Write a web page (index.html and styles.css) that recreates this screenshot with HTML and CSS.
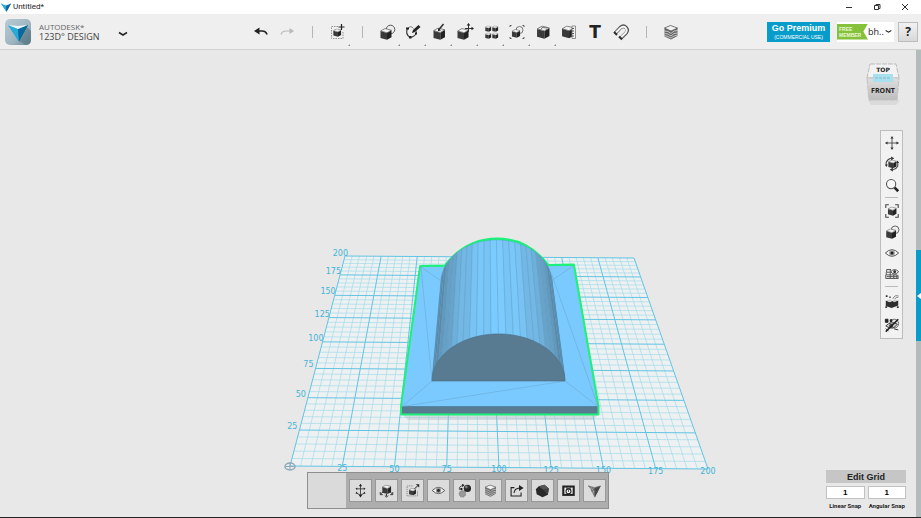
FILE: index.html
```html
<!DOCTYPE html>
<html lang="en">
<head>
<meta charset="utf-8">
<title>Untitled*</title>
<link rel="stylesheet" href="styles.css">
</head>
<body>
<svg class="defs" aria-hidden="true">
  <defs>
    <linearGradient id="g-mark" x1="0" x2="1"><stop offset="0" stop-color="#35b4e0"/><stop offset=".5" stop-color="#0f86bb"/><stop offset="1" stop-color="#07527f"/></linearGradient>
    <linearGradient id="g-tile" x1="0" x2="1" y2="1"><stop offset="0" stop-color="#b9cbd4"/><stop offset=".6" stop-color="#9db4c0"/><stop offset="1" stop-color="#66828f"/></linearGradient>
    <linearGradient id="g-cube" x1="0" x2="0" y1="0" y2="1"><stop offset="0" stop-color="#dedede"/><stop offset="1" stop-color="#bdbdbd"/></linearGradient>
    <radialGradient id="g-ball" cx=".35" cy=".3"><stop offset="0" stop-color="#aaa"/><stop offset=".5" stop-color="#333"/><stop offset="1" stop-color="#222"/></radialGradient>
  </defs>
  <symbol id="cube" viewBox="0 0 12 12"><path d="M.5 3 7 5v6.700L.5 10Z" fill="#3a3a3a"/><path d="M7 5 11.500 2.300v7L7 11.700Z" fill="#222"/><path d="M.7 3 5 .5l6.300 1.700L7 4.800Z" fill="#f2f2f2" stroke="#444" stroke-width=".6"/></symbol>
  <symbol id="mark" viewBox="0 0 20 18"><path d="M0 1 10 5 20 1 11 17.500Z" fill="url(#g-mark)"/><path d="M0 1 10 5 11 17.500Z" fill="#28a9d9"/><path d="M10 5 20 1 11 17.500Z" fill="#086a9c"/><path d="M0 1 10 5 20 1 10 2Z" fill="#e8f6fb"/></symbol>
  <symbol id="undo" viewBox="0 0 18 18"><path d="M4 8h6q4 0 5 3.500" fill="none" stroke="currentColor" stroke-width="1.600"/><path d="M2 8 7.500 4.500v7Z" fill="currentColor"/></symbol>
  <symbol id="redo" viewBox="0 0 18 18"><path d="M14 8H8q-4 0-5 3.500" fill="none" stroke="currentColor" stroke-width="1.200"/><path d="M16 8 11.500 5v6Z" fill="currentColor"/></symbol>
  <symbol id="insert" viewBox="0 0 18 18"><path d="M10 3.500H3.500v12h11.500V8" fill="none" stroke="#888" stroke-width=".9" stroke-dasharray="1.500 1"/><use href="#cube" x="5" y="5.500" width="8.500" height="8.500"/><path d="M13.500 1v6M10.500 4h6" stroke="#222" stroke-width="1.200"/></symbol>
  <symbol id="primitive" viewBox="0 0 18 18"><circle cx="12.500" cy="6.500" r="4.300" fill="#eee" stroke="#555"/><use href="#cube" x="2" y="5" width="12" height="12"/></symbol>
  <symbol id="sketch" viewBox="0 0 18 18"><path d="M3.500 5.500Q1 11 6 14.500q6-1 6.500-6" fill="none" stroke="#333" stroke-width="1.100"/><path d="M3.500 5.500Q7 2 9.500 5.500" fill="none" stroke="#777"/><path d="m8 10 1-3 5.500-5 2 2-5.500 5Z" fill="#222"/><path d="M2 4.500h3v2H2zM5 13h2.500v2.500H5zM11 9.500h2v2h-2z" fill="#222"/></symbol>
  <symbol id="construct" viewBox="0 0 18 18"><use href="#cube" x="3" y="4.500" width="12.500" height="12.500"/><path d="m9 6.500 4.500-5.500" stroke="#333" stroke-width="1.600"/><path d="M8 5v3l3-.5Z" fill="#222"/></symbol>
  <symbol id="modify" viewBox="0 0 18 18"><use href="#cube" x="1" y="5" width="12" height="12"/><path d="M9 5.500h8M12.500 2v7" stroke="#333"/><path d="m12.500 0 1.800 2.500h-3.600ZM18 5.500l-2.500 1.800V3.700Z" fill="#222"/></symbol>
  <symbol id="pattern" viewBox="0 0 18 18"><use href="#cube" x="3" y="2.500" width="6.500" height="6.500"/><use href="#cube" x="10" y="2.500" width="6.500" height="6.500"/><use href="#cube" x="3" y="9.500" width="6.500" height="6.500"/><use href="#cube" x="10" y="9.500" width="6.500" height="6.500"/></symbol>
  <symbol id="group" viewBox="0 0 18 18"><circle cx="11.500" cy="7" r="3.500" fill="none" stroke="#777"/><use href="#cube" x="3.500" y="6" width="9" height="9"/><path d="M2 4V2.500h1.500M14.500 2.500H16V4M2 14v1.500h1.500M14.500 15.500H16V14" fill="none" stroke="#555"/></symbol>
  <symbol id="combine" viewBox="0 0 18 18"><use href="#cube" x="2.500" y="2.500" width="13.500" height="13.500"/><path d="M8 4.500 7 6.500M8 4.500l5 .5" fill="none" stroke="#444" stroke-width=".7"/></symbol>
  <symbol id="measure" viewBox="0 0 18 18"><use href="#cube" x="1.500" y="2.500" width="13" height="13"/><path d="M12 3h3.500v12.500H12Z" fill="#f2f2f2" stroke="#777" stroke-width=".8"/><path d="M12 5.500h2M12 8h2M12 10.500h2M12 13h2" stroke="#444" stroke-width=".9"/></symbol>
  <symbol id="snap" viewBox="0 0 18 18"><path d="m3.500 10 5-5.500q3-2.500 5.500 0t0 5.500l-5 5" fill="none" stroke="#555" stroke-width="3.600"/><path d="m4 9.500 4.700-4.700q3-2.200 5 0t0 5l-4.500 4.500" fill="none" stroke="#f4f4f4" stroke-width="2"/><path d="m2 9 3 3M7 13.500l3 3" stroke="#333" stroke-width="2"/></symbol>
  <symbol id="material" viewBox="0 0 18 18"><path d="m2.500 5 6-2.500L15.500 5v8l-6.500 3.500-6.500-3Z" fill="#666"/><path d="m2.500 5 6-2.500L15.500 5 9 8Z" fill="#f2f2f2" stroke="#555" stroke-width=".7"/><path d="m2.500 8 3.500.5 3 2 3-2.500 3.500-.5M2.500 10.500l3.500.5 3 2 3-2.500 3.500-.5M2.500 12.500 6 13.500l3 1.500 3-2 3.500-1" fill="none" stroke="#ddd" stroke-width=".8"/></symbol>
  <symbol id="pan" viewBox="0 0 18 18"><path d="M9 3v12M3 9h12" stroke="#444"/><path d="m9 1 1.800 3H7.200ZM9 17l1.800-3H7.200ZM1 9l3-1.800v3.600ZM17 9l-3-1.800v3.600Z" fill="#333"/></symbol>
  <symbol id="orbit" viewBox="0 0 18 18"><use href="#cube" x="4.500" y="4" width="10" height="10"/><path d="M2.500 11V7Q4.500 3 8 2.500M15.500 7v4.500q-2 3.500-5.500 4" fill="none" stroke="#444" stroke-width="1.200"/><path d="m8 .5 3.500 2L8 5ZM10 17.500l-3.500-2 3.500-2.500ZM1 9.500l1.700 3 1.700-3ZM17 8l-1.700-3L13.600 8Z" fill="#333"/></symbol>
  <symbol id="zoom" viewBox="0 0 18 18"><circle cx="8" cy="8" r="5.200" fill="#f7f7f7" stroke="#555" stroke-width="1.200"/><path d="m12 12 4 4" stroke="#222" stroke-width="3"/></symbol>
  <symbol id="fit" viewBox="0 0 18 18"><use href="#cube" x="4" y="4" width="10.500" height="10.500"/><path d="M2 5.500V2h3.500M12.500 2H16v3.500M2 12.500V16h3.500M12.500 16H16v-3.500" fill="none" stroke="#444" stroke-width="1.200"/></symbol>
  <symbol id="eye" viewBox="0 0 18 18"><path d="M1.500 9Q9 1.500 16.500 9 9 16.500 1.500 9Z" fill="#f4f4f4" stroke="#444"/><circle cx="9" cy="9" r="3.200" fill="#999"/><circle cx="9" cy="9" r="1.700" fill="#222"/></symbol>
  <symbol id="grideye" viewBox="0 0 18 18"><path d="M3 4h5M3 4v3h4M2.500 7v3h12M2 10v4h14l-.5-4M7 4v10M11 10v4M14.500 10v4M3 12h12" fill="none" stroke="#444"/><path d="M7.500 6.500q4.500-5 9 0-4.500 5-9 0Z" fill="#eee" stroke="#444"/><circle cx="12" cy="6.500" r="1.600" fill="#333"/></symbol>
  <symbol id="snapgroup" viewBox="0 0 18 18"><path d="m2 8.500 4.500 2 3-1.500 2 1 4.500-1.500V14l-7.500 3L2 14.500Z" fill="#2e2e2e"/><path d="m3 8.500 4-1.500 2 1.500-2.500 1.500ZM9.500 8.800l3-1.500 3 1-3.500 1.500Z" fill="#ccc"/><path d="M10 6.500q2-5 6.500-3M12 7q1.500-3 4-2" fill="none" stroke="#777"/><path d="M2 2.500h2v2H2zM6 4h1.500v1.500H6zM1.500 15h2v2h-2zM14.500 15h2v2h-2z" fill="#333"/></symbol>
  <symbol id="hide" viewBox="0 0 18 18"><circle cx="11.500" cy="7.500" r="5" fill="#e4e4e4" stroke="#666"/><path d="M2 10q6-6 13-2-5 8-13 2Z" fill="#ccc" stroke="#333"/><circle cx="8" cy="10" r="2.300" fill="#444"/><path d="M2 16.500 16 2.500" stroke="#222" stroke-width="1.800"/><path d="M1.500 2.500h3v3.500h-3zM7 3h2v2H7zM2 13l3 3M11.500 13.500l4.500 1" stroke="#222" fill="#222"/></symbol>
  <symbol id="move" viewBox="0 0 18 18"><path d="M9 3v13M4.500 7h9M4 11q1 3 5 3t5-3" fill="none" stroke="#333"/><path d="m9 1 2 3H7ZM9 17.500l2-3H7ZM3 7l2-1.500v3ZM15 7l-2-1.500v3ZM3 13l3-.5-2-2ZM15 13l-3-.5 2-2Z" fill="#222"/></symbol>
  <symbol id="drop" viewBox="0 0 18 18"><use href="#cube" x="3.500" y="2" width="11.500" height="11.500"/><path d="m2 13 2.500-2M16 13l-2.500-2M1.500 11v3h3M16.500 11v3h-3M9 13v3M7 15l2 2 2-2" fill="none" stroke="#333" stroke-width="1.200"/></symbol>
  <symbol id="scale" viewBox="0 0 18 18"><path d="M9 3.500H2.500v12H15V9" fill="none" stroke="#777" stroke-dasharray="1.500 1"/><use href="#cube" x="4.500" y="6" width="9" height="9"/><path d="m11.500 7 3.500-3.500" stroke="#222" stroke-width="1.200"/><path d="M17 1.500v4l-4-4Z" fill="#222"/></symbol>
  <symbol id="balls" viewBox="0 0 18 18"><circle cx="12.500" cy="6.500" r="4.300" fill="url(#g-ball)"/><circle cx="6.500" cy="13" r="3.900" fill="#999" stroke="#666" stroke-dasharray="1 1"/><path d="M3 8q-1-4 4-5" fill="none" stroke="#333"/><path d="m6 1 3 1.500L6.500 5ZM4 6h2.500v2.500H4Z" fill="#222"/></symbol>
  <symbol id="export" viewBox="0 0 18 18"><path d="M6.500 5.500H2.500V15.500h12v-4M6 12q.5-5.500 7-6" fill="none" stroke="#222" stroke-width="1.300"/><path d="M12 2.500v7l5.500-3.500Z" fill="#222"/></symbol>
  <symbol id="hex" viewBox="0 0 18 18"><path d="m4.500 4 7-2 5 4.500-1 7.500-6.500 3L2 13.500 1 7.500Z" fill="#292929"/><path d="m4.500 4 7-2 5 4.500L10 8Z" fill="#555"/><path d="m10 8 6.500-1.500-1 7.500Z" fill="#404040"/></symbol>
  <symbol id="print" viewBox="0 0 18 18"><path d="M1.500 3h15v12.500h-15Z" fill="#222"/><path d="M4 5.500h10V13H4Z" fill="#eee"/><circle cx="9" cy="10" r="3" fill="none" stroke="#222" stroke-width="1.300"/><path d="M7 5v2h4V5M9 8.500v2" stroke="#222" fill="none"/></symbol>
  <symbol id="mesh" viewBox="0 0 18 18"><path d="m1.500 3.500 7.500 2 7.500-2-7 13.500Z" fill="#aaa"/><path d="m9 6 7.500-2.500-7 13.500Z" fill="#444"/><path d="m1.500 3.500 7.500 2 7.500-2M5 7l4.500 10M1.500 3.500l11 7.500M9 6v10M6 5l6 6M5 10l9-5" fill="none" stroke="#555" stroke-width=".7"/></symbol>
  <symbol id="chevron" viewBox="0 0 10 6"><path d="m1 1.500 4 2.500 4-2.500" fill="none" stroke="#222" stroke-width="1.500"/></symbol>
</svg>

<header class="titlebar">
  <svg class="titlebar-mark"><use href="#mark"/></svg>
  <span class="titlebar-name">Untitled*</span>
  <div class="window-buttons">
    <button aria-label="Minimize"><svg viewBox="0 0 8 8"><path d="M1 4.500h6"/></svg></button>
    <button aria-label="Restore"><svg viewBox="0 0 8 8"><path d="M1.500 2.500h4v4h-4ZM3 2.500v-1h4v4H5.500"/></svg></button>
    <button aria-label="Close"><svg viewBox="0 0 8 8"><path d="m1 1 6 6M7 1 1 7"/></svg></button>
  </div>
</header>

<div class="toolbar">
  <div class="brand">
    <svg class="brand-tile" viewBox="0 0 26 26"><rect width="26" height="26" rx="5" fill="url(#g-tile)"/><path d="m14 22 8-14 4 4v9q0 5-5 5Z" fill="#547481" opacity=".6"/><use href="#mark" x="3" y="5" width="20" height="18"/></svg>
    <div class="brand-text"><span class="brand-company">AUTODESK*</span><span class="brand-product">123D° DESIGN</span></div>
    <button class="brand-menu" aria-label="Main menu"><svg><use href="#chevron"/></svg></button>
  </div>
  <nav class="tools" aria-label="Tools">
    <button class="tool" aria-label="Undo"><svg><use href="#undo"/></svg></button>
    <button class="tool tool-off" aria-label="Redo"><svg><use href="#redo"/></svg></button>
    <span class="divider"></span>
    <button class="tool tool-more" aria-label="Insert"><svg><use href="#insert"/></svg></button>
    <span class="divider"></span>
    <button class="tool tool-more" aria-label="Primitives"><svg><use href="#primitive"/></svg></button>
    <button class="tool tool-more" aria-label="Sketch"><svg><use href="#sketch"/></svg></button>
    <button class="tool tool-more" aria-label="Construct"><svg><use href="#construct"/></svg></button>
    <button class="tool tool-more" aria-label="Modify"><svg><use href="#modify"/></svg></button>
    <button class="tool tool-more" aria-label="Pattern"><svg><use href="#pattern"/></svg></button>
    <button class="tool tool-more" aria-label="Grouping"><svg><use href="#group"/></svg></button>
    <button class="tool tool-more" aria-label="Combine"><svg><use href="#combine"/></svg></button>
    <button class="tool" aria-label="Measure"><svg><use href="#measure"/></svg></button>
    <button class="tool tool-text" aria-label="Text">T</button>
    <button class="tool" aria-label="Snap"><svg><use href="#snap"/></svg></button>
    <span class="divider"></span>
    <button class="tool" aria-label="Material"><svg><use href="#material"/></svg></button>
  </nav>
  <div class="account">
    <button class="premium"><strong>Go Premium</strong><span>(COMMERCIAL USE)</span></button>
    <div class="member">
      <span class="ribbon"><span>FREE</span><span>MEMBER</span></span>
      <select aria-label="Account"><option>bh..</option></select>
      <svg><use href="#chevron"/></svg>
    </div>
    <button class="help" aria-label="Help">?</button>
  </div>
</div>

<main class="stage">
  <svg class="scene" viewBox="0 50 921 467" preserveAspectRatio="xMidYMid slice" role="img" aria-label="Model on grid">
    <g id="grid"></g>
    <ellipse cx="290" cy="466.500" rx="5" ry="3.500" fill="none" stroke="#8ea9b8" stroke-width="1.500"/>
    <path d="M286 466.500h8M290 463v7" stroke="#8ea9b8"/>
    <g id="labels" class="grid-labels"></g>
    <path d="M403 415h195l-6 5H408Z" fill="#aebbc2" opacity=".4"/>
    <path d="M420.500 266.500 445 266Q466 239 497 239T548 265.500L573.500 265 598 406.500V414H401.500V406.500Z" fill="#7bcaff" stroke="#1df17b" stroke-width="3" stroke-linejoin="round"/>
    <path d="M421 267 573 266 597.500 406.500H402Z" fill="#7bcaff"/>
    <path d="M402 406.500H597.500V413.500H402Z" fill="#587b92"/>
    <path d="M402 406.500H597.500" stroke="#4c7c9c" stroke-width=".7"/>
    <path d="M402 406.500 432 381M402 406.500 565 381 598 406.500 552 275M421 267l11 114M421 267l20 14M573 266l-22 15" fill="none" stroke="#6aa9d2" stroke-width=".6"/>
    <g id="barrel"></g>
  </svg>

  <div class="viewcube">
    <svg viewBox="0 0 40 46" aria-hidden="true"><path d="M5 40h32l-4 5H8Z" fill="#ccc" opacity=".5"/><path d="M7 4h26l3 14H4Z" fill="#f2f2f2" stroke="#bbb" stroke-dasharray="5 1"/><path d="M4 18h32l-2 22H6Z" fill="url(#g-cube)" stroke="#c2c2c2" stroke-dasharray="6 1"/><path d="M10 14h20v8H10Z" fill="#a9e0ef"/><path d="M12 18h16" stroke="#83b8c8" stroke-dasharray="3 1"/></svg>
    <span class="viewcube-top">TOP</span>
    <span class="viewcube-front">FRONT</span>
  </div>

  <nav class="navbar" aria-label="View">
    <button aria-label="Pan"><svg><use href="#pan"/></svg></button>
    <button aria-label="Orbit"><svg><use href="#orbit"/></svg></button>
    <button aria-label="Zoom"><svg><use href="#zoom"/></svg></button>
    <hr>
    <button aria-label="Fit"><svg><use href="#fit"/></svg></button>
    <button aria-label="Display mode"><svg><use href="#primitive"/></svg></button>
    <button aria-label="Visibility"><svg><use href="#eye"/></svg></button>
    <button aria-label="Grid visibility"><svg><use href="#grideye"/></svg></button>
    <hr>
    <button class="tall" aria-label="Group snap"><svg><use href="#snapgroup"/></svg></button>
    <button class="tall" aria-label="Hide sketches"><svg><use href="#hide"/></svg></button>
  </nav>

  <div class="context">
    <div class="context-name"></div>
    <div class="context-tools">
      <button aria-label="Move"><svg><use href="#move"/></svg></button>
      <button aria-label="Drop to grid"><svg><use href="#drop"/></svg></button>
      <button aria-label="Scale"><svg><use href="#scale"/></svg></button>
      <button aria-label="Hide"><svg><use href="#eye"/></svg></button>
      <button aria-label="Replace"><svg><use href="#balls"/></svg></button>
      <button aria-label="Material"><svg><use href="#material"/></svg></button>
      <button aria-label="Export"><svg><use href="#export"/></svg></button>
      <button aria-label="Convert"><svg><use href="#hex"/></svg></button>
      <button aria-label="Print"><svg><use href="#print"/></svg></button>
      <button aria-label="Mesh"><svg><use href="#mesh"/></svg></button>
    </div>
  </div>

  <form class="snaps">
    <button type="button" class="edit-grid">Edit Grid</button>
    <div class="snap-field"><input id="linear" value="1"><label for="linear">Linear Snap</label></div>
    <div class="snap-field"><input id="angular" value="1"><label for="angular">Angular Snap</label></div>
  </form>

  <div class="edge"><button class="edge-handle" aria-label="Open panel"></button></div>
</main>
<script src="script.js"></script>
</body>
</html>
```
FILE: styles.css
```css
* { box-sizing: border-box; }

body {
  margin: 0;
  height: 100vh;
  display: flex;
  flex-direction: column;
  background: #e8e8e8;
  font-family: "Open Sans", "Noto Sans", sans-serif;
  color: #222;
  overflow: hidden;
}

button {
  display: flex;
  align-items: center;
  justify-content: center;
  margin: 0;
  padding: 0;
  border: 0;
  background: none;
  color: inherit;
  font: inherit;
}

.defs { position: absolute; width: 0; height: 0; }

/* Title bar */
.titlebar {
  display: flex;
  align-items: center;
  height: 14px;
  padding: 0 10px 0 1px;
  background: #fff;
}
.titlebar-mark { width: 10px; height: 9px; margin-right: 2px; }
.titlebar-name { font: 8px/14px Roboto, sans-serif; }
.window-buttons { display: flex; gap: 16px; margin-left: auto; }
.window-buttons button { width: 12px; height: 14px; }
.window-buttons svg { width: 8px; height: 8px; fill: none; stroke: #333; stroke-width: 1; }

/* Toolbar */
.toolbar {
  display: flex;
  align-items: center;
  height: 36px;
  background: #efefef;
  border-bottom: 1px solid #d3d3d3;
}
.brand { display: flex; align-items: center; width: 248px; padding-left: 5px; }
.brand-tile { width: 26px; height: 26px; margin-right: 8px; }
.brand-text { display: flex; flex-direction: column; width: 79px; line-height: 10px; white-space: nowrap; color: #444; }
.brand-company { font-size: 8px; color: #666; }
.brand-product { font-size: 9px; font-weight: 500; }
.brand-menu { width: 10px; height: 8px; margin-top: 4px; }
.brand-menu svg { width: 10px; height: 6px; }

.tools { display: flex; align-items: center; }
.tool { position: relative; width: 26px; height: 28px; }
.tool svg { width: 18px; height: 18px; }
.tool-off { color: #b9b9b9; }
.tool-text { font: bold 17px/18px "DejaVu Sans", sans-serif; }
.tool-more::after {
  content: "";
  position: absolute;
  right: 0;
  bottom: 0;
  border: 1px solid transparent;
  border-right-color: #888;
  border-bottom-color: #888;
}
.divider { width: 24px; height: 12px; background: linear-gradient(#b5b5b5, #b5b5b5) center / 1px 100% no-repeat; }

.account { display: flex; align-items: center; margin-left: auto; padding-right: 3px; }
.premium {
  flex-direction: column;
  width: 63px;
  height: 20px;
  margin-right: 7px;
  background: #089ccb;
  color: #fff;
  font-family: "Liberation Sans", sans-serif;
}
.premium strong { font-size: 9px; line-height: 11px; }
.premium span { font-size: 5px; line-height: 7px; white-space: nowrap; }
.member { display: flex; align-items: center; width: 57px; height: 20px; margin-right: 4px; padding-right: 2px; background: #fff; }
.ribbon {
  display: flex;
  flex-direction: column;
  width: 31px;
  height: 16px;
  padding: 2px 0 0 2px;
  background: #86c13c;
  clip-path: polygon(0 0, 100% 0, 85% 50%, 100% 100%, 0 100%);
  color: #e9f7d4;
  font: bold 5px/6px "Liberation Sans", sans-serif;
}
.member select {
  appearance: none;
  width: 17px;
  padding: 0;
  border: 0;
  background: none;
  color: #222;
  font: 9px/16px "Open Sans", sans-serif;
}
.member svg { width: 7px; height: 5px; }
.help {
  width: 20px;
  height: 20px;
  border: 1px solid #bdbdbd;
  background: linear-gradient(#f2f2f2, #d8d8d8);
  font-size: 12px;
  font-weight: 700;
}

/* Stage and its floating panels */
.stage { position: relative; flex: 1; min-height: 0; border-bottom: 1px solid #222; }
.scene { display: block; width: 100%; height: 100%; }
.grid-labels { fill: #43b5d8; font: 8px "DejaVu Sans", sans-serif; }

.viewcube { position: absolute; top: 10px; right: 18px; width: 40px; height: 46px; text-align: center; }
.viewcube svg { position: absolute; inset: 0; }
.viewcube span { position: absolute; left: 0; width: 100%; font-weight: 700; }
.viewcube .viewcube-top { top: 6px; font: bold 6px/8px "DejaVu Sans", sans-serif; }
.viewcube-front { top: 26px; font-size: 7px; line-height: 10px; }

.navbar {
  position: absolute;
  top: 80px;
  right: 18px;
  display: flex;
  flex-direction: column;
  align-items: center;
  width: 23px;
  padding: 1px 0;
  border: 1px solid #bdbdbd;
  background: #f2f2f2;
}
.navbar button { width: 21px; height: 21px; }
.navbar .tall { height: 24px; }
.navbar svg { width: 16px; height: 16px; }
.navbar hr { width: 13px; height: 1px; margin: 2px 0; border: 0; background: #bbb; }

.context {
  position: absolute;
  left: 50%;
  bottom: 8px;
  display: flex;
  width: 302px;
  height: 37px;
  margin-left: -154px;
  border: 1px solid #8e8e8e;
  background: #adadad;
}
.context-name { flex: 1; background: #dadada; }
.context-tools { display: flex; align-items: center; gap: 3px; padding: 0 2px 0 3px; }
.context-tools button { width: 23px; height: 23px; border: 1px solid #989898; background: #dcdcdc; }
.context-tools svg { width: 15px; height: 15px; }

.snaps {
  position: absolute;
  right: 15px;
  bottom: 7px;
  display: grid;
  grid-template-columns: 1fr 1fr;
  gap: 3px;
  width: 80px;
  font-family: "Liberation Sans", sans-serif;
}
.edit-grid { grid-column: 1 / -1; height: 13px; background: #c6c6c6; font-size: 9px; font-weight: 700; }
.snap-field { display: flex; flex-direction: column; align-items: center; gap: 3px; }
.snap-field input {
  width: 100%;
  height: 13px;
  padding: 0;
  border: 1px solid #c2c2c2;
  background: #fff;
  text-align: center;
  font: bold 8px/11px "Liberation Sans", sans-serif;
}
.snap-field label { font: bold 6px/8px Roboto, sans-serif; white-space: nowrap; }

.edge { position: absolute; top: 0; right: 0; bottom: 0; display: flex; align-items: center; width: 5px; background: #b3bcbc; }
.edge-handle { width: 5px; height: 91px; margin-top: 24px; background: #089ccb; }
.edge-handle::before { content: ""; border: 3px solid transparent; border-left: 0; border-right: 4px solid #fff; }
```
FILE: script.js
```js
const NS = "http://www.w3.org/2000/svg";

function add(parent, name, attrs, text) {
  const el = document.createElementNS(NS, name);
  for (const key in attrs) el.setAttribute(key, attrs[key]);
  if (text !== undefined) el.textContent = text;
  parent.appendChild(el);
}

// Perspective map from the unit square to the corners of the work plane.
function perspective([x0, y0], [x1, y1], [x2, y2], [x3, y3]) {
  const dx1 = x1 - x2, dx2 = x3 - x2, sx = x0 - x1 + x2 - x3;
  const dy1 = y1 - y2, dy2 = y3 - y2, sy = y0 - y1 + y2 - y3;
  const den = dx1 * dy2 - dx2 * dy1;
  const g = (sx * dy2 - dx2 * sy) / den;
  const h = (dx1 * sy - sx * dy1) / den;
  return (u, v) => {
    const w = g * u + h * v + 1;
    return [
      ((x1 - x0 + g * x1) * u + (x3 - x0 + h * x3) * v + x0) / w,
      ((y1 - y0 + g * y1) * u + (y3 - y0 + h * y3) * v + y0) / w
    ];
  };
}

const project = perspective([290, 466], [708, 469], [634, 258], [345, 256]);
const grid = document.getElementById("grid");
const corners = [project(0, 0), project(1, 0), project(1, 1), project(0, 1)];
add(grid, "polygon", { points: corners.join(" "), fill: "#edf1f2" });

function line(a, b, major) {
  add(grid, "line", {
    x1: a[0], y1: a[1], x2: b[0], y2: b[1],
    stroke: major ? "#62c4e3" : "#a3dbe9",
    "stroke-width": major ? 1 : 0.7
  });
}
for (const major of [false, true]) {
  for (let i = 0; i <= 40; i++) {
    if ((i % 5 === 0) !== major) continue;
    const t = i / 40;
    line(project(t, 0), project(t, 1), major);
    line(project(0, t), project(1, t), major);
  }
}

const labels = document.getElementById("labels");
for (let n = 25; n <= 200; n += 25) {
  const bottom = project(n / 200, 0);
  add(labels, "text", { x: bottom[0], y: bottom[1] + 5, "text-anchor": "middle" }, n);
  const side = project(0, n / 200);
  const shift = n === 200 ? 3 : n >= 100 ? 1 : -2;
  add(labels, "text", { x: side[0] + shift, y: side[1] - (n === 200 ? 0 : 1), "text-anchor": "end" }, n);
}

// Half cylinder: facets run from the back arc to the front arc.
const barrel = document.getElementById("barrel");
const front = a => [498.5 - 66.5 * Math.cos(a), 381 - 47 * Math.sin(a)];
const back = a => [496.5 - 55.5 * Math.cos(a), 282 - 42 * Math.sin(a)];
const dark = [84, 119, 142], light = [124, 203, 255];
const steps = 28;
for (let i = 0; i < steps; i++) {
  const a = Math.PI * i / steps, b = Math.PI * (i + 1) / steps;
  const k = Math.min(1, Math.pow(Math.sin((a + b) / 2), 1.3) - (i % 3 === 0 ? 0.07 : 0));
  const rgb = dark.map((c, j) => Math.round(c + (light[j] - c) * k));
  add(barrel, "polygon", {
    points: [back(a), back(b), front(b), front(a)].join(" "),
    fill: `rgb(${rgb})`, stroke: "#5a94bb", "stroke-width": 0.3
  });
}
const arc = [];
for (let i = 0; i <= 48; i++) arc.push(front(Math.PI * i / 48));
add(barrel, "polygon", { points: arc.join(" "), fill: "#587b92", stroke: "#4c6c80", "stroke-width": 0.6 });
```
